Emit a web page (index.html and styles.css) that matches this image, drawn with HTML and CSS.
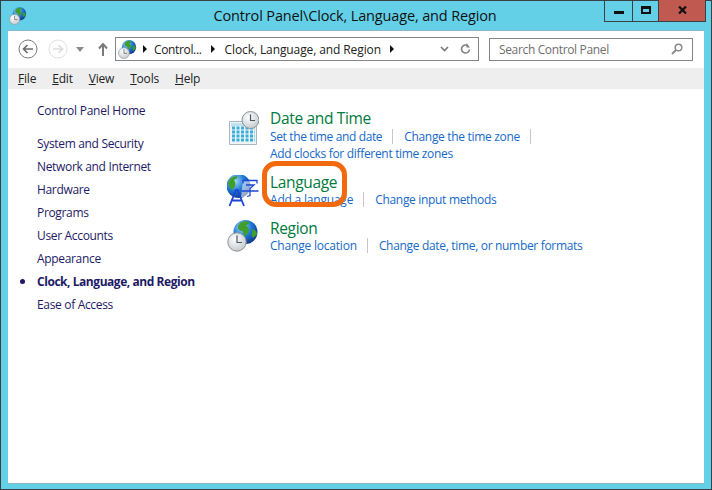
FILE: index.html
```html
<!DOCTYPE html>
<html lang="en">
<head>
<meta charset="utf-8">
<title>Control Panel</title>
<link rel="stylesheet" href="styles.css">
</head>
<body>
<svg class="defs" width="0" height="0" aria-hidden="true">
  <defs>
    <radialGradient id="globe" cx="0.35" cy="0.3" r="0.8">
      <stop offset="0" stop-color="#a5dcf7"/><stop offset="0.5" stop-color="#1f78d8"/><stop offset="1" stop-color="#102c78"/>
    </radialGradient>
    <radialGradient id="clockface" cx="0.4" cy="0.35" r="0.8">
      <stop offset="0" stop-color="#ffffff"/><stop offset="1" stop-color="#b9c0c4"/>
    </radialGradient>
    <symbol id="globeclock" viewBox="0 0 32 32">
      <circle cx="18.500" cy="12" r="12" fill="url(#globe)"/>
      <path d="M13 3c3-2 7-2 9-1 1 2-1 3-3 3 1 2 3 2 3 5 0 3-2 4-4 6-2-1-1-4-3-5-2 0-4-1-4-4 0-2 1-2 2-4zM26 9c2 1 4 3 4 5-1 2-3 3-4 4-1-2-2-3-1-5 0-2 0-3 1-4z" fill="#3f9e2c"/>
      <circle cx="10" cy="22" r="9.200" fill="url(#clockface)" stroke="#8d9498"/>
      <path d="M10 15.500V22.500H15" fill="none" stroke="#4f575b" stroke-width="1.200"/>
    </symbol>
  </defs>
</svg>
<div class="window">
  <header class="titlebar">
    <svg class="title-icon"><use href="#globeclock"/></svg>
    <h1 class="title">Control Panel\Clock, Language, and Region</h1>
    <div class="controls">
      <span class="ctl ctl-min"><i></i></span>
      <span class="ctl ctl-max"><i></i></span>
      <span class="ctl ctl-close">
        <svg width="9" height="8" viewBox="0 0 9 8"><path d="M1 0.500l7 7M8 0.500l-7 7" stroke="#111" stroke-width="2.200" fill="none"/></svg>
      </span>
    </div>
  </header>
  <div class="client">
    <div class="toolbar">
      <svg class="nav nav-back" width="20" height="20" viewBox="0 0 20 20"><circle cx="10" cy="10" r="9" fill="#fff" stroke="#7c7c7c"/><path d="M15 10H6M9.500 6L5.500 10l4 4" fill="none" stroke="#6c6c6c" stroke-width="1.700"/></svg>
      <svg class="nav nav-fwd" width="20" height="20" viewBox="0 0 20 20"><circle cx="10" cy="10" r="9" fill="#fff" stroke="#e0e0e0"/><path d="M5 10h9M10.500 6l4 4-4 4" fill="none" stroke="#dcdcdc" stroke-width="1.700"/></svg>
      <svg class="nav-drop" width="8" height="5" viewBox="0 0 8 5"><path d="M0 0h8L4 5z" fill="#8a8a8a"/></svg>
      <svg class="nav-up" width="10" height="13" viewBox="0 0 10 13"><path d="M5 1v12M1 5.500l4-4.500 4 4.500" fill="none" stroke="#7a7a7a" stroke-width="2"/></svg>
      <div class="address">
        <svg class="addr-icon"><use href="#globeclock"/></svg>
        <span class="crumb-arrow"></span><span class="crumb crumb-cp">Control...</span>
        <span class="crumb-arrow"></span><span class="crumb crumb-cl">Clock, Language, and Region</span>
        <span class="crumb-arrow"></span>
        <span class="addr-tools">
          <svg width="9" height="6" viewBox="0 0 9 6"><path d="M1 1l3.500 3.500L8 1" fill="none" stroke="#777" stroke-width="1.600"/></svg>
          <svg width="11" height="12" viewBox="0 0 11 12"><path d="M9.500 6.500a4 4 0 1 1-2-4" fill="none" stroke="#808080" stroke-width="1.600"/><path d="M6.500 0v4.500H10z" fill="#808080"/></svg>
        </span>
      </div>
      <div class="search">
        <span>Search Control Panel</span>
        <svg width="12" height="12" viewBox="0 0 12 12"><circle cx="7.500" cy="4.500" r="3.300" fill="none" stroke="#8a8a8a" stroke-width="1.500"/><path d="M5 7L1 11" stroke="#8a8a8a" stroke-width="2"/></svg>
      </div>
    </div>
    <nav class="menubar">
      <span><u>F</u>ile</span><span><u>E</u>dit</span><span><u>V</u>iew</span><span><u>T</u>ools</span><span><u>H</u>elp</span>
    </nav>
    <main class="main">
      <aside class="side">
        <div class="side-home">Control Panel Home</div>
        <ul class="side-list">
          <li>System and Security</li>
          <li>Network and Internet</li>
          <li>Hardware</li>
          <li>Programs</li>
          <li>User Accounts</li>
          <li>Appearance</li>
          <li class="current">Clock, Language, and Region</li>
          <li>Ease of Access</li>
        </ul>
      </aside>
      <section class="cats">
        <article class="cat cat-date">
          <svg class="cat-icon" viewBox="0 0 32 34">
            <path d="M2.500 10.500h27v23h-27z" fill="#eef4f7" stroke="#a9b8c0"/>
            <path d="M4 12h24v3H4z" fill="#bfe2ef"/>
            <path d="M5 17h23M5 21h23M5 25h23M5 29h23" stroke="#38aeda" stroke-width="3" stroke-dasharray="3 1.500"/>
            <circle cx="23.500" cy="9" r="8.500" fill="url(#clockface)" stroke="#8d9498"/>
            <path d="M23.500 3.500V9.500H28" fill="none" stroke="#4f575b" stroke-width="1.200"/>
          </svg>
          <div class="cat-body">
            <h2>Date and Time</h2>
            <div class="links"><a class="first">Set the time and date</a><a>Change the time zone</a><a class="no-sep">Add clocks for different time zones</a></div>
          </div>
        </article>
        <article class="cat cat-lang">
          <svg class="cat-icon" viewBox="0 0 32 32">
            <circle cx="11.500" cy="11" r="12" fill="url(#globe)"/>
            <path d="M1 8c1-4 5-7 9-7 1 2-1 3-3 4 1 2 2 3 1 6-1 2-2 3-3 4-2-1-2-3-3-4z" fill="#3f9e2c"/>
            <path d="M16 5h15v17H14z" fill="#fff" opacity="0.550"/>
            <path d="M16 8.500v-3h14v3M19 10h8l-4 3.500M14.500 16h17M23 13.500v7l-3 1" fill="none" stroke="#1a45d8" stroke-width="1.300"/>
            <path d="M2.500 31L9 15h1.500L17 31M5 25.500h10" fill="none" stroke="#1a45d8" stroke-width="1.800"/>
          </svg>
          <div class="cat-body">
            <h2>Language</h2>
            <div class="links"><a class="first">Add a language</a><a class="no-sep">Change input methods</a></div>
          </div>
          <div class="mark"></div>
        </article>
        <article class="cat cat-region">
          <svg class="cat-icon" viewBox="0 0 32 32"><use href="#globeclock"/></svg>
          <div class="cat-body">
            <h2>Region</h2>
            <div class="links"><a class="first">Change location</a><a class="no-sep">Change date, time, or number formats</a></div>
          </div>
        </article>
      </section>
    </main>
  </div>
</div>
</body>
</html>
```
FILE: styles.css
```css
* { box-sizing: border-box; }
html, body { margin: 0; padding: 0; background: #fff; }
body { width: 712px; height: 490px; overflow: hidden; font-family: "Open Sans", "Noto Sans", sans-serif; }
.defs { position: absolute; }
.window { width: 712px; height: 490px; background: #63d0e8; border: 1px solid #3b4045; border-bottom-width: 0; padding: 0 7px 7px; display: flex; flex-direction: column; box-shadow: inset 0 -1px 0 #3b4045; }
.titlebar { height: 30px; flex: none; position: relative; display: flex; justify-content: center; }
.title-icon { position: absolute; left: 1px; top: 6px; width: 18px; height: 18px; }
.title { margin: 0; font-size: 14.500px; font-weight: 400; color: #111; line-height: 29px; letter-spacing: -0.15px; padding-right: 2px; }
.controls { position: absolute; right: -2px; top: -1px; height: 22px; display: flex; border: 1px solid #3b4045; border-top: 0; }
.ctl { display: flex; align-items: center; justify-content: center; }
.ctl-min { width: 28px; border-right: 1px solid #3b4045; }
.ctl-min i { width: 10px; height: 3px; background: #111; margin-top: 3px; }
.ctl-max { width: 26px; border-right: 1px solid #3b4045; }
.ctl-max i { width: 10px; height: 8px; border: 2px solid #111; border-top-width: 3px; margin-top: -2px; }
.ctl-close { width: 46px; background: #c05a50; padding-bottom: 2px; }
.client { flex: 1; background: #fff; display: flex; flex-direction: column; box-shadow: 0 -1px 0 #8fb6c6, 0 1px 0 #8fb6c6; }
.toolbar { height: 37px; flex: none; display: flex; align-items: center; padding: 0 11px 1px 10px; }
.nav-fwd { margin-left: 10px; }
.nav-drop { margin-left: 8px; }
.nav-up { margin-left: 14px; }
.address { margin-left: 7px; width: 364px; height: 24px; border: 1px solid #868686; display: flex; align-items: center; padding-left: 2px; font-size: 12px; color: #222; }
.addr-icon { width: 19px; height: 19px; margin-right: 6px; }
.crumb-arrow { width: 0; height: 0; border-left: 4px solid #111; border-top: 4px solid transparent; border-bottom: 4px solid transparent; }
.crumb { white-space: nowrap; }
.crumb-cp { margin: 0 9px 0 7px; letter-spacing: -0.35px; }
.crumb-cl { margin: 0 9px 0 10px; letter-spacing: -0.1px; }
.addr-tools { margin-left: auto; display: flex; align-items: center; gap: 11px; padding-right: 7px; }
.search { margin-left: 10px; width: 204px; height: 23px; border: 1px solid #868686; display: flex; align-items: center; justify-content: space-between; padding: 0 9px; font-size: 12px; color: #6e6e6e; letter-spacing: -0.35px; }
.menubar { height: 21px; flex: none; background: #eeeeee; display: flex; gap: 16px; padding-left: 10px; font-size: 12px; line-height: 21px; color: #222; letter-spacing: -0.2px; }
.main { flex: 1; display: flex; font-size: 12px; }
.side { width: 219px; flex: none; padding: 13px 0 0 29px; color: #1d1a66; letter-spacing: -0.33px; }
.side-home { line-height: 17px; margin-bottom: 16px; letter-spacing: -0.25px; }
.side-list { list-style: none; margin: 0; padding: 0; display: flex; flex-direction: column; gap: 6px; }
.side-list li { line-height: 17px; white-space: nowrap; position: relative; }
.side-list .current { font-weight: 700; letter-spacing: -0.45px; }
.current::before { content: ""; position: absolute; left: -17px; top: 6px; width: 5px; height: 5px; border-radius: 50%; background: #1d1a66; }
.cats { flex: 1; padding-top: 19px; display: flex; flex-direction: column; }
.cat { display: flex; position: relative; }
.cat-icon { width: 32px; flex: none; margin-right: 11px; }
.cat-date { height: 64px; }
.cat-date .cat-icon { height: 34px; margin-top: 3px; }
.cat-lang { height: 46px; }
.cat-lang .cat-icon { height: 32px; margin-top: 3px; }
.cat-region .cat-icon { height: 32px; margin-top: 2px; }
.cat-body h2 { margin: 0; font-size: 15.500px; font-weight: 400; color: #007a40; line-height: 20px; letter-spacing: -0.33px; }
.links { width: 300px; display: flex; flex-wrap: wrap; font-size: 12px; line-height: 17px; color: #1569c8; letter-spacing: -0.32px; }
.links a { white-space: nowrap; padding-right: 10px; margin-right: 11px; border-right: 1px solid #c8c8c8; height: 15px; line-height: 16px; margin-top: 1px; margin-bottom: 1px; }
.links a.no-sep { border-right: 0; margin-right: 0; padding-right: 0; }
.cat-date .links .first { letter-spacing: -0.37px; }
.cat-lang .links .first, .cat-region .links .first { letter-spacing: -0.2px; }
.cat-region .links { width: 340px; }
.cat-lang .links, .cat-region .links { margin-top: -1px; }
.mark { position: absolute; left: 35px; top: -11px; width: 85px; height: 46px; border: 5px solid #f26a0d; border-radius: 14px; }
```
